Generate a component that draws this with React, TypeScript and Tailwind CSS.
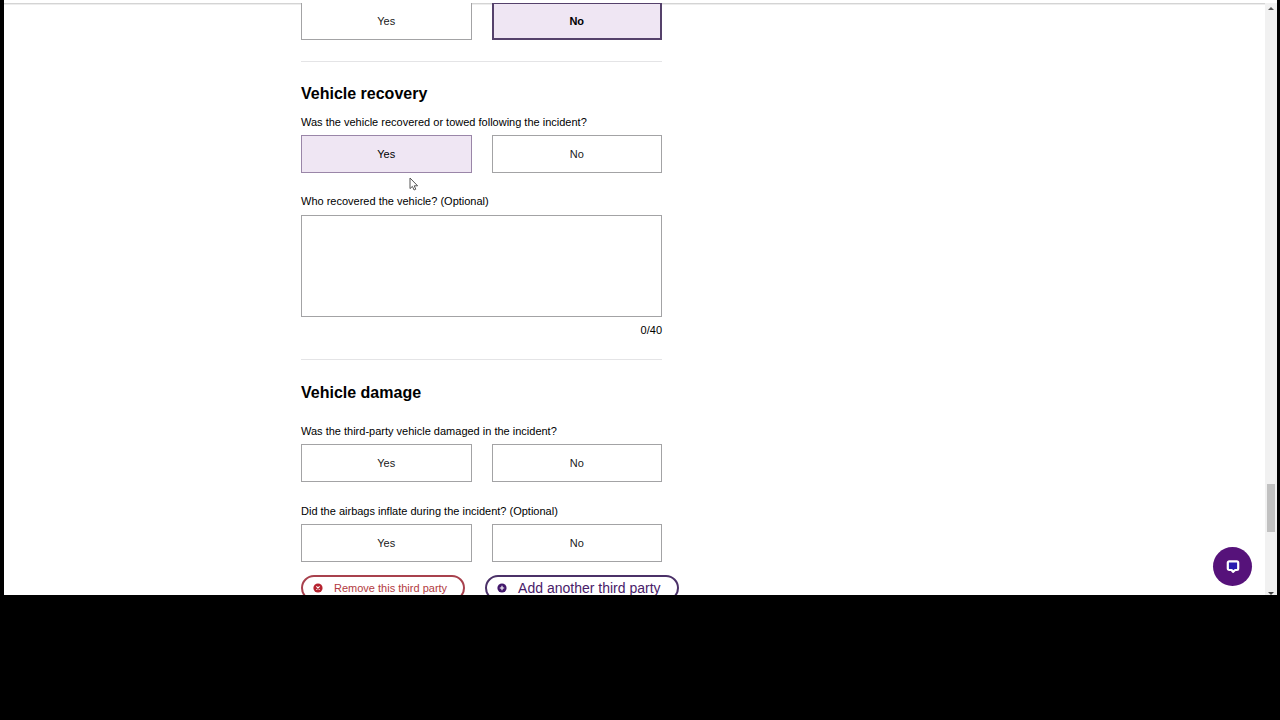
import { useState } from "react";
import clsx from "clsx";

type Answer = "Yes" | "No";

interface YesNoProps {
  label: string;
  hideLabel?: boolean;
  initial?: Answer;
  emphasis?: boolean;
  className?: string;
}

function YesNo({ label, hideLabel, initial, emphasis, className }: YesNoProps) {
  const [answer, setAnswer] = useState<Answer | undefined>(initial);
  const options: Answer[] = ["Yes", "No"];

  return (
    <div role="group" aria-label={label} className={className}>
      {!hideLabel && (
        <p className="mb-[5px] text-[11px] leading-4 text-black">{label}</p>
      )}
      <div className="grid grid-cols-2 gap-5">
        {options.map((option) => {
          const selected = answer === option;
          return (
            <button
              key={option}
              type="button"
              aria-pressed={selected}
              onClick={() => setAnswer(option)}
              className={clsx(
                "h-[38px] text-[11px] leading-4",
                !selected && "border border-[#a3a3a5] bg-white text-[#202020]",
                selected && "bg-[#efe6f3] text-black",
                selected && emphasis && "border-2 border-[#55416b] font-bold",
                selected && !emphasis && "border border-[#9a86a8]"
              )}
            >
              {option}
            </button>
          );
        })}
      </div>
    </div>
  );
}

function Divider() {
  return <hr className="mt-[21px] border-t border-[#e4e4e6]" />;
}

function RecoveredBy() {
  const [value, setValue] = useState("");

  return (
    <div className="mt-5">
      <label htmlFor="recovered-by" className="block text-[11px] leading-4 text-black">
        Who recovered the vehicle? (Optional)
      </label>
      <textarea
        id="recovered-by"
        maxLength={40}
        value={value}
        onChange={(e) => setValue(e.target.value)}
        className="mt-1.5 block h-[102px] w-full resize-none border border-[#a3a3a5] bg-white p-2 text-[11px] leading-4 outline-none"
      />
      <p className="mt-[5px] text-right text-[11px] leading-4 text-black">
        {value.length}/40
      </p>
    </div>
  );
}

function ThirdPartyActions() {
  return (
    <div className="mt-[13px] flex gap-5">
      <button
        type="button"
        className="flex h-[26px] shrink-0 items-center gap-[11px] rounded-full border-2 border-[#a8414d] bg-white pr-4 pl-2.5 text-[11px] leading-4 whitespace-nowrap text-[#b23a41]"
      >
        <svg width="10" height="10" viewBox="0 0 10 10" aria-hidden="true">
          <circle cx="5" cy="5" r="4.6" fill="#b5232f" />
          <path d="M3.4 3.4l3.2 3.2M6.6 3.4L3.4 6.6" stroke="#fff" strokeWidth="1.1" />
        </svg>
        Remove this third party
      </button>
      <button
        type="button"
        className="flex h-[26px] shrink-0 items-center gap-[11px] rounded-full border-2 border-[#4b3168] bg-white pr-4 pl-2.5 text-sm leading-4 whitespace-nowrap text-[#482069]"
      >
        <svg width="10" height="10" viewBox="0 0 10 10" aria-hidden="true">
          <circle cx="5" cy="5" r="4.6" fill="#42176b" />
          <path d="M2.8 5h4.4M5 2.8v4.4" stroke="#fff" strokeWidth="1.1" />
        </svg>
        Add another third party
      </button>
    </div>
  );
}

function Scrollbar() {
  return (
    <div className="flex w-3 shrink-0 flex-col items-center bg-[#f1f1f1] pt-1" aria-hidden="true">
      <svg width="6" height="3" viewBox="0 0 6 3">
        <path d="M3 0l3 3H0z" fill="#555" />
      </svg>
      <div className="grow-[474]" />
      <div className="h-12 w-2 bg-[#c1c1c1]" />
      <div className="grow-[60]" />
      <svg width="6" height="3" viewBox="0 0 6 3">
        <path d="M0 0h6L3 3z" fill="#444" />
      </svg>
    </div>
  );
}

function ChatButton() {
  return (
    <button
      type="button"
      aria-label="Open chat"
      className="absolute right-[25px] bottom-[9px] flex size-[39px] items-center justify-center rounded-full bg-[#56127a]"
    >
      <svg width="14" height="14" viewBox="0 0 14 14" aria-hidden="true">
        <path
          d="M3.2 1.4h7.6a1.4 1.4 0 0 1 1.4 1.4v5.8a1.4 1.4 0 0 1-1.4 1.4H9.2L7 11.9 5.6 10H3.2a1.4 1.4 0 0 1-1.4-1.4V2.8a1.4 1.4 0 0 1 1.4-1.4z"
          fill="#2a1cb0"
          stroke="#fff"
          strokeWidth="2.2"
          strokeLinejoin="round"
        />
      </svg>
    </button>
  );
}

function Cursor() {
  return (
    <svg
      className="pointer-events-none absolute top-[174px] left-[405px]"
      width="10"
      height="14"
      viewBox="0 0 10 14"
      aria-hidden="true"
    >
      <path
        d="M1 1v10.6l2.4-2.2 1.7 3.6 1.7-.8-1.6-3.4h3.4z"
        fill="#fff"
        stroke="#555"
        strokeWidth="1"
      />
    </svg>
  );
}

export default function App() {
  return (
    <div className="h-screen bg-black pr-[3px] pb-[125px] pl-1 font-['Liberation_Sans',Arial,sans-serif]">
      <div className="flex h-full flex-col bg-white">
        <header className="h-[3px] shrink-0 bg-white" />
        <div className="relative flex min-h-0 flex-1 overflow-hidden shadow-[inset_0_1px_0_#d4d4d4,inset_0_2px_0_#ededed]">
          <main className="min-w-0 flex-1 overflow-hidden pl-[297px]">
            <form className="-mt-px max-w-[361px]">
              <YesNo label="Previous question" hideLabel initial="No" emphasis />

              <Divider />

              <h2 className="mt-5 text-base leading-6 font-bold text-black">Vehicle recovery</h2>
              <YesNo
                className="mt-2"
                label="Was the vehicle recovered or towed following the incident?"
                initial="Yes"
              />
              <RecoveredBy />

              <Divider />

              <h2 className="mt-[21px] text-base leading-6 font-bold text-black">Vehicle damage</h2>
              <YesNo
                className="mt-[18px]"
                label="Was the third-party vehicle damaged in the incident?"
              />
              <YesNo
                className="mt-[21px]"
                label="Did the airbags inflate during the incident? (Optional)"
              />

              <ThirdPartyActions />
            </form>
          </main>
          <Scrollbar />
          <ChatButton />
          <Cursor />
        </div>
      </div>
    </div>
  );
}
